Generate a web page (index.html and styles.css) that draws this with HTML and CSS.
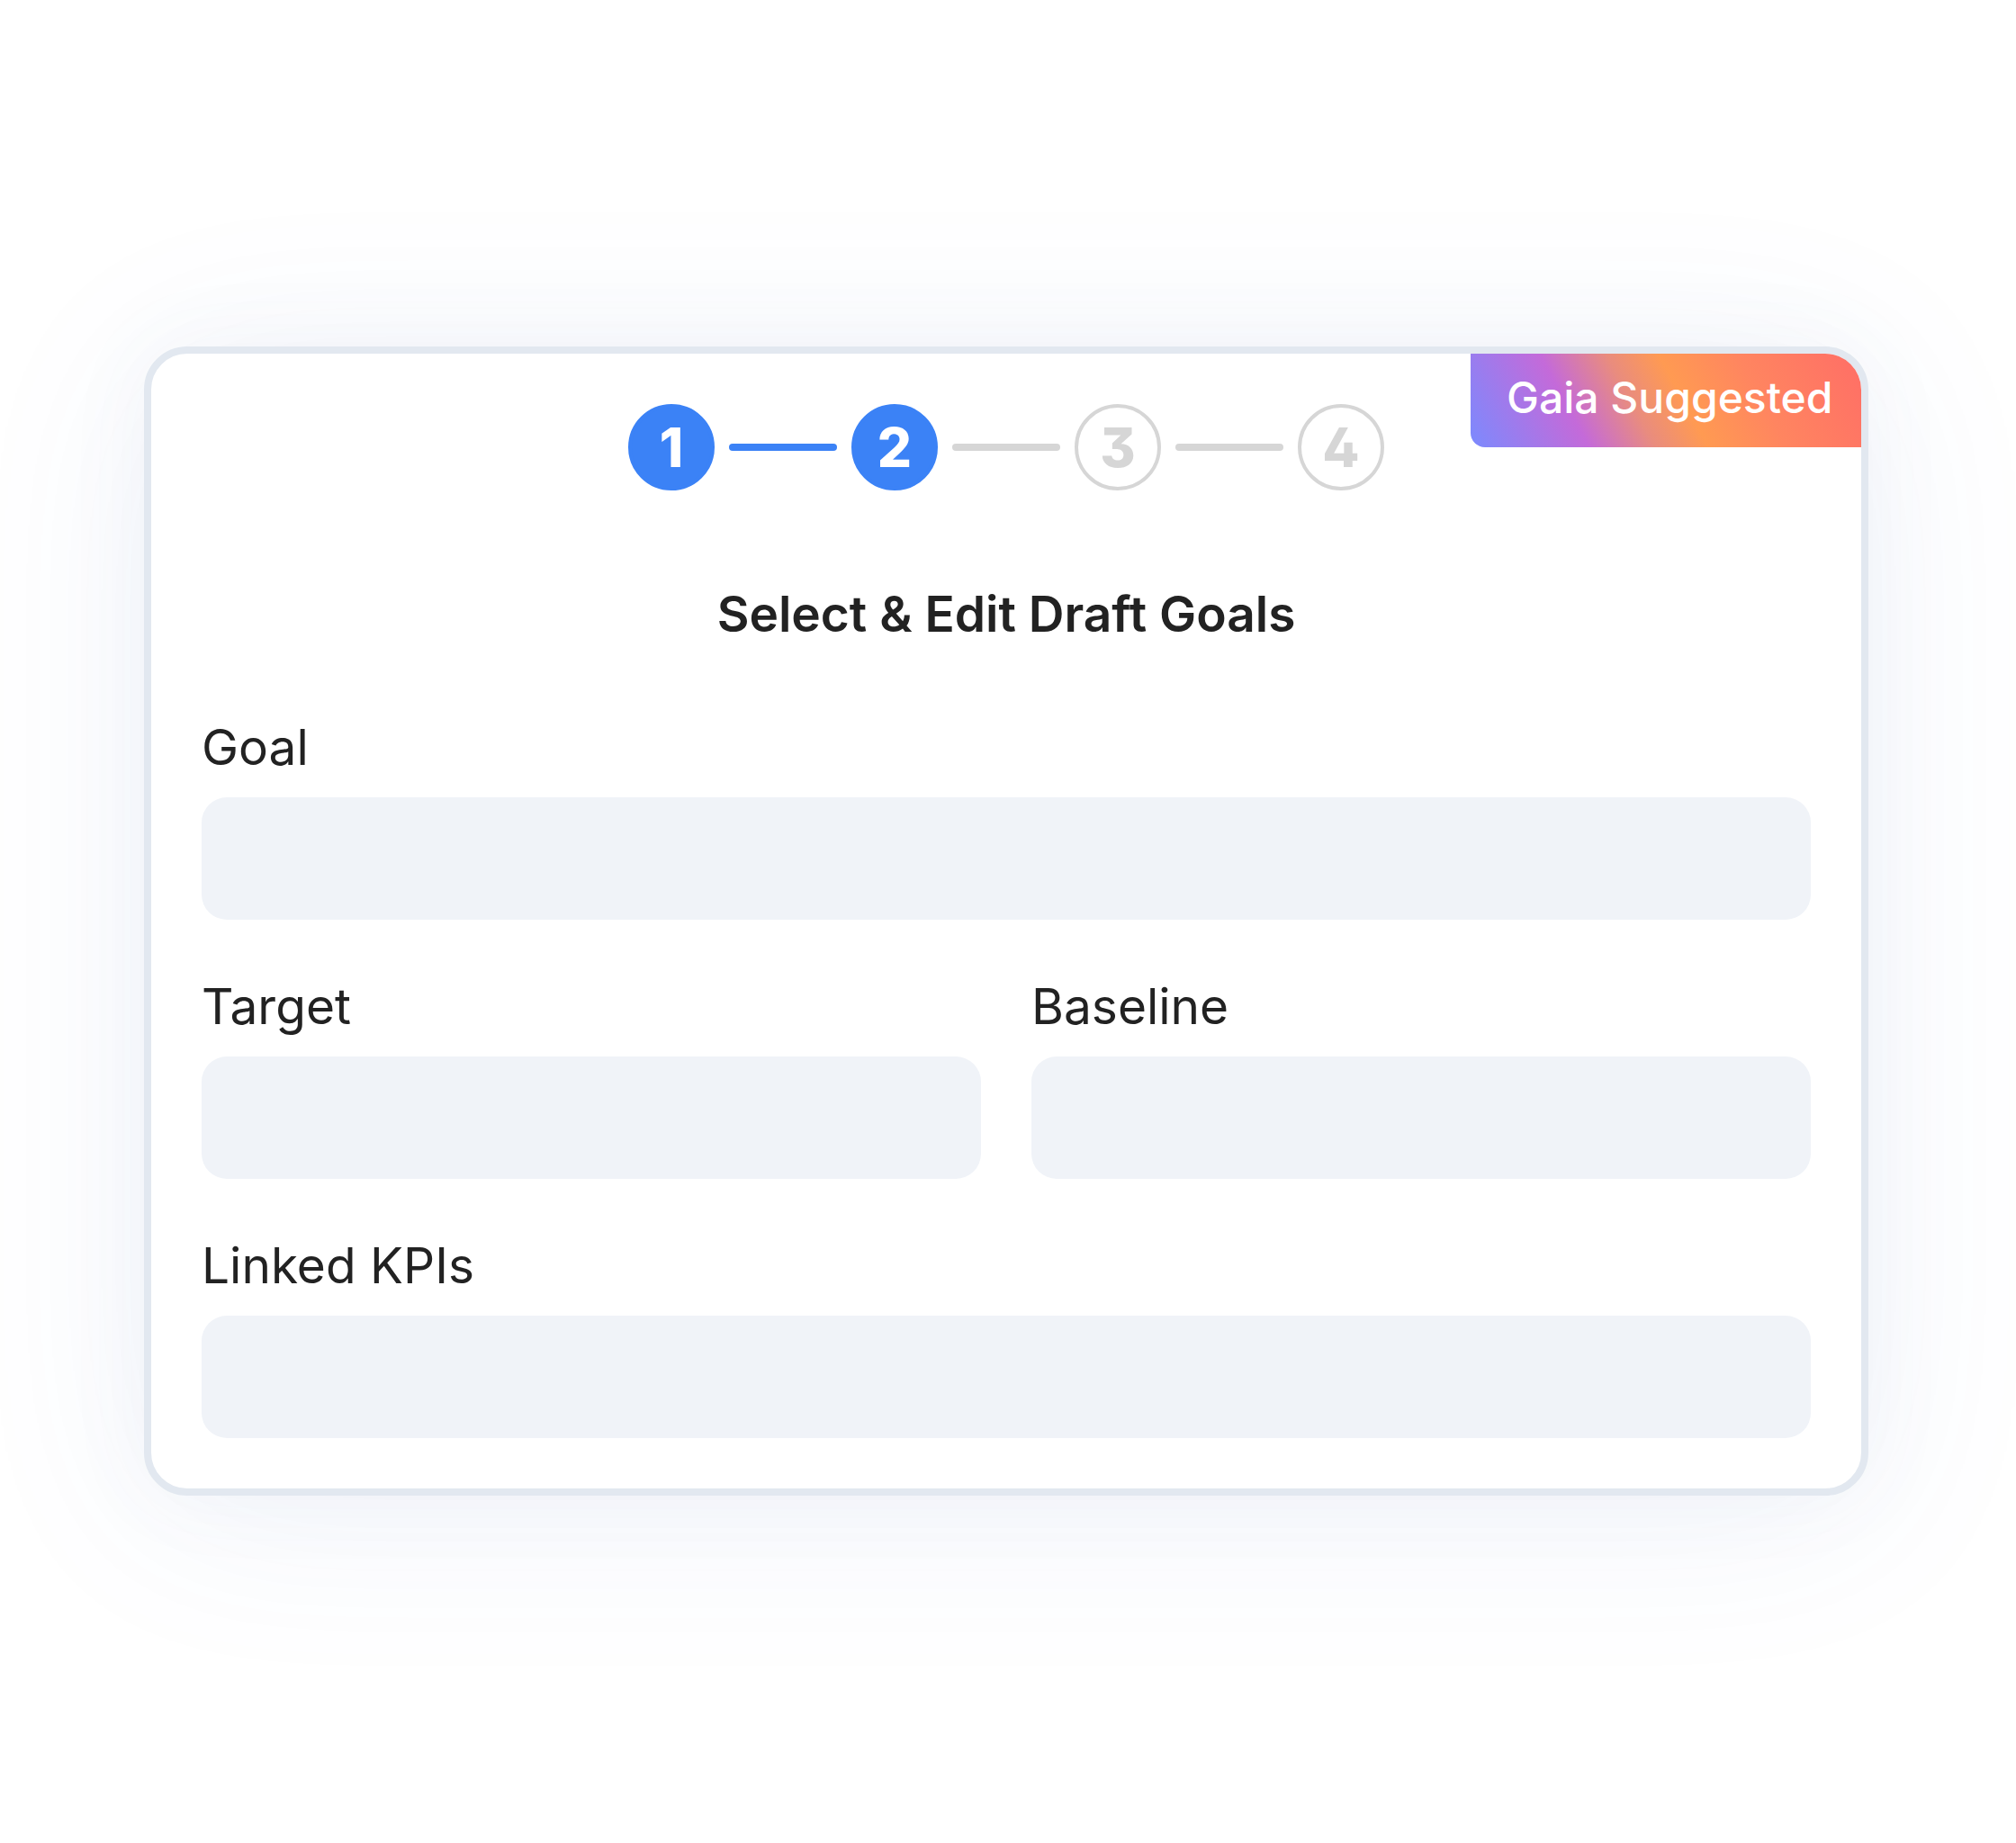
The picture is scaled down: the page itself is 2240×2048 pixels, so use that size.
FILE: index.html
```html
<!DOCTYPE html>
<html lang="en">
<head>
<meta charset="utf-8">
<title>Select & Edit Draft Goals</title>
<link rel="stylesheet" href="styles.css">
</head>
<body>
<div class="page">
  <div class="card">
    <div class="badge">Gaia Suggested</div>
    <div class="stepper">
      <div class="step is-active">1</div>
      <div class="bar is-active"></div>
      <div class="step is-active">2</div>
      <div class="bar"></div>
      <div class="step">3</div>
      <div class="bar"></div>
      <div class="step">4</div>
    </div>
    <h1 class="title">Select &amp; Edit Draft Goals</h1>
    <div class="fields">
      <div class="field field-full">
        <label class="label">Goal</label>
        <div class="input"></div>
      </div>
      <div class="field">
        <label class="label">Target</label>
        <div class="input"></div>
      </div>
      <div class="field">
        <label class="label">Baseline</label>
        <div class="input"></div>
      </div>
      <div class="field field-full">
        <label class="label">Linked KPIs</label>
        <div class="input"></div>
      </div>
    </div>
  </div>
</div>
</body>
</html>
```

FILE: styles.css
```css
html, body {
  margin: 0;
  padding: 0;
  background: #ffffff;
}

body {
  font-family: Inter, "Noto Sans", "Liberation Sans", sans-serif;
  color: #222222;
}

.page {
  padding: 385px 164px 386px 160px;
  min-height: 2048px;
  box-sizing: border-box;
}

.card {
  position: relative;
  overflow: hidden;
  background: #ffffff;
  border: 8px solid #e2e8f0;
  border-radius: 48px;
  padding: 56px 56px 56px;
  box-shadow: 0 20px 220px rgba(59, 100, 200, 0.07), 0 0 100px rgba(100, 116, 160, 0.05);
}

.badge {
  position: absolute;
  top: 0;
  right: 0;
  width: 434px;
  height: 104px;
  box-sizing: border-box;
  padding: 0 0 8px 40px;
  display: flex;
  align-items: center;
  color: #ffffff;
  font-size: 48px;
  font-weight: 500;
  border-bottom-left-radius: 16px;
  background: linear-gradient(62deg, #7b8afe 0%, #c46ad9 27%, #e98c7e 42%, #ff9a52 54%, #ff8560 72%, #ff6e66 100%);
}

.stepper {
  display: flex;
  justify-content: center;
  align-items: center;
  gap: 16px;
}

.step {
  width: 96px;
  height: 96px;
  box-sizing: border-box;
  border-radius: 50%;
  border: 4px solid #d6d6d6;
  color: #d6d6d6;
  display: flex;
  align-items: center;
  justify-content: center;
  font-size: 60px;
  font-weight: 800;
  line-height: 1;
  font-feature-settings: "cv09" 1, "cv02" 1;
}

.step.is-active {
  background: #3b82f6;
  border-color: #3b82f6;
  color: #ffffff;
}

.bar {
  width: 120px;
  height: 8px;
  border-radius: 4px;
  background: #d6d6d6;
}

.bar.is-active {
  background: #3b82f6;
}

.title {
  margin: 103px 0 0;
  text-align: center;
  font-size: 55px;
  line-height: 68px;
  font-weight: 600;
  color: #222222;
}

.fields {
  margin-top: 80px;
  display: grid;
  grid-template-columns: 1fr 1fr;
  column-gap: 56px;
  row-gap: 62px;
}

.field-full {
  grid-column: 1 / -1;
}

.label {
  display: block;
  font-size: 55px;
  line-height: 68px;
  font-weight: 400;
  color: #222222;
  margin-bottom: 22px;
}

.input {
  height: 136px;
  border-radius: 28px;
  background: #f0f3f8;
}
```
